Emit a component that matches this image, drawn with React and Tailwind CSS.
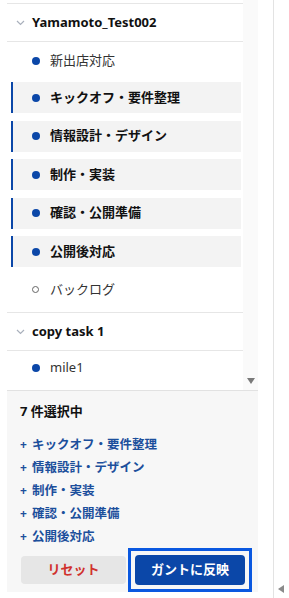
import React from 'react';

const font = { fontFamily: '"Noto Sans", "Noto Sans CJK JP", sans-serif' };

const selected = ['キックオフ・要件整理', '情報設計・デザイン', '制作・実装', '確認・公開準備', '公開後対応'];

const Chevron = () => (
  <svg width="9" height="6" viewBox="0 0 9 6" className="shrink-0">
    <path d="M1 1l3.5 3.5L8 1" fill="none" stroke="#a9b0bc" strokeWidth="1.2" />
  </svg>
);

const GroupHeader = ({ title }) => (
  <div className="h-[38px] flex items-center pl-[9px] gap-[7px] border-b border-[#e6e6e6]">
    <Chevron />
    <span className="text-[13px] font-bold text-[#111]">{title}</span>
  </div>
);

const Dot = ({ hollow }) =>
  hollow ? (
    <span className="w-[7px] h-[7px] rounded-full border border-[#666] shrink-0" />
  ) : (
    <span className="w-[8px] h-[8px] rounded-full bg-[#0b47a8] shrink-0" />
  );

export default function App() {
  return (
    <div className="w-[289px] h-[598px] bg-white relative flex overflow-hidden" style={font}>
      <div className="ml-[7px] w-[251px] flex flex-col">
        {/* list area */}
        <div className="h-[390px] flex">
          <div className="w-[236px] flex flex-col">
            <div className="h-[4px] border-b border-[#e6e6e6]" />
            <GroupHeader title="Yamamoto_Test002" />
            <div className="h-[37px] flex items-center pl-[25px] gap-[10px]">
              <Dot />
              <span className="text-[13px] text-[#333]">新出店対応</span>
            </div>
            <div className="flex flex-col gap-[7.5px] mt-[3px]">
              {selected.map((t) => (
                <div
                  key={t}
                  className="h-[31px] ml-[4px] mr-[2px] bg-[#f3f3f3] border-l-2 border-[#0b47a8] flex items-center pl-[19px] gap-[10px]"
                >
                  <Dot />
                  <span className="text-[13px] font-bold text-[#111]">{t}</span>
                </div>
              ))}
            </div>
            <div className="h-[46px] flex items-center pl-[25px] gap-[11px] border-b border-[#e6e6e6]">
              <Dot hollow />
              <span className="text-[13px] text-[#333]">バックログ</span>
            </div>
            <GroupHeader title="copy task 1" />
            <div className="h-[34px] flex items-center pl-[25px] gap-[10px]">
              <Dot />
              <span className="text-[13px] text-[#333]">mile1</span>
            </div>
          </div>
          <div className="w-[15px] bg-[#fafafa] flex flex-col justify-end items-center pb-[6px]">
            <span className="w-0 h-0 border-l-[4px] border-r-[4px] border-t-[6px] border-l-transparent border-r-transparent border-t-[#7a7a7a]" />
          </div>
        </div>

        {/* selection summary */}
        <div className="h-[202px] bg-[#f7f7f7] border-t border-[#e2e2e2] flex flex-col pl-[13px]">
          <div className="mt-[11px] text-[13px] font-bold text-[#111]">7 件選択中</div>
          <div className="mt-[12px] flex flex-col">
            {selected.map((t) => (
              <div key={t} className="h-[23px] flex items-center gap-[5px] text-[12.5px] font-bold text-[#1c4f9c]">
                <span className="text-[12px]">+</span>
                <span>{t}</span>
              </div>
            ))}
          </div>
          <div className="-mt-[1px] flex items-center">
            <button className="ml-[1px] w-[105px] h-[28px] rounded-[4px] bg-[#e6e6e6] text-[13px] font-bold text-[#d0312d]">
              リセット
            </button>
            <div className="ml-[2px] border-[3px] border-[#0a58e0] p-[4px]">
              <button className="w-[110px] h-[30px] rounded-[4px] bg-[#0b47a8] text-[13px] font-bold text-white">
                ガントに反映
              </button>
            </div>
          </div>
        </div>
      </div>

      <div className="ml-[15px] w-px h-full bg-[#e3e3e3]" />
      <span className="absolute left-[278px] bottom-[5px] w-0 h-0 border-t-[4px] border-b-[4px] border-r-[6px] border-t-transparent border-b-transparent border-r-[#8a8a8a]" />
    </div>
  );
}
